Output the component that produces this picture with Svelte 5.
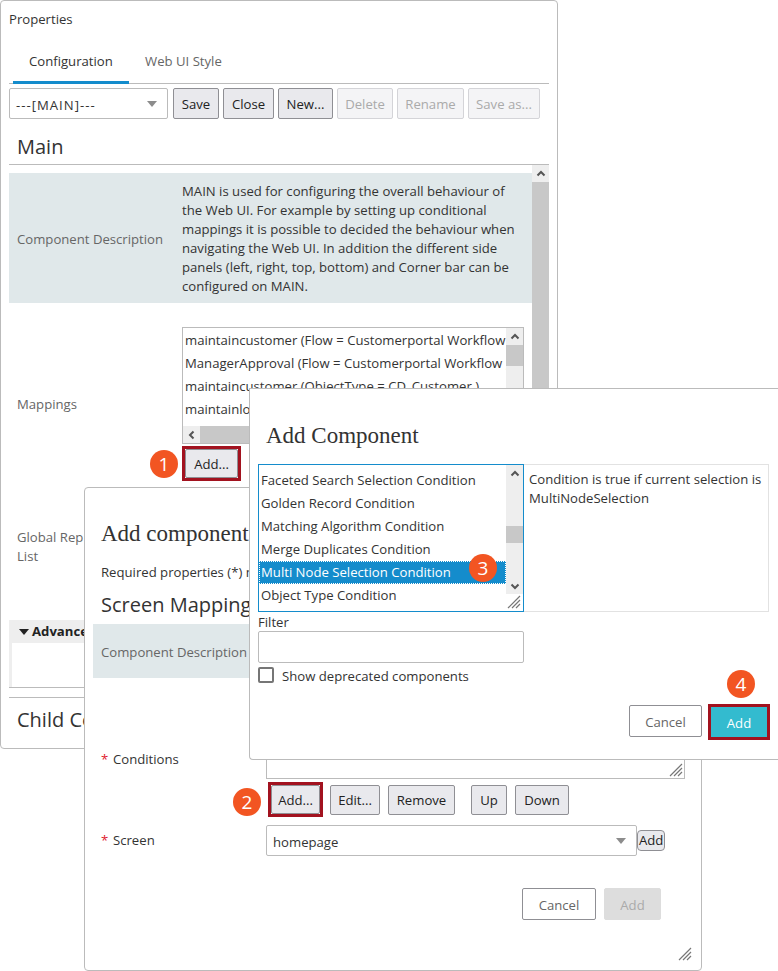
<script>
	const tools = [
		{ label: 'Save' },
		{ label: 'Close' },
		{ label: 'New...' },
		{ label: 'Delete', off: true },
		{ label: 'Rename', off: true },
		{ label: 'Save as...', off: true }
	];
	const mappings = [
		'maintaincustomer (Flow = Customerportal Workflow , State = Start )',
		'ManagerApproval (Flow = Customerportal Workflow , State = Approve )',
		'maintaincustomer (ObjectType = CD_Customer )',
		'maintainlocation (ObjectType = CD_Location )'
	];
	const components = [
		'Faceted Search Selection Condition',
		'Golden Record Condition',
		'Matching Algorithm Condition',
		'Merge Duplicates Condition',
		'Multi Node Selection Condition',
		'Object Type Condition'
	];
	let selected = 'Multi Node Selection Condition';
</script>

{#snippet up()}
	<svg class="arrow" viewBox="0 0 10 10"><path d="M1.5 6.5 5 3l3.5 3.5" /></svg>
{/snippet}
{#snippet down()}
	<svg class="arrow" viewBox="0 0 10 10"><path d="M1.5 3.5 5 7l3.5-3.5" /></svg>
{/snippet}
{#snippet left()}
	<svg class="arrow" viewBox="0 0 10 10"><path d="M6.5 1.5 3 5l3.5 3.5" /></svg>
{/snippet}
{#snippet grip()}
	<svg class="grip" viewBox="0 0 14 14"><path d="M1 13 13 1M5 13l8-8M9 13l4-4" /></svg>
{/snippet}
{#snippet caret()}
	<span class="caret"></span>
{/snippet}

<div class="desk">
	<section class="win props">
		<div class="win-title">Properties</div>
		<div class="tabs">
			<div class="tab active">Configuration</div>
			<div class="tab">Web UI Style</div>
		</div>
		<div class="toolbar">
			<div class="select main-select">---[MAIN]---{@render caret()}</div>
			{#each tools as t}
				<button class="btn" class:off={t.off}>{t.label}</button>
			{/each}
		</div>
		<h2 class="main-head">Main</h2>
		<div class="scroller">
			<div class="content">
				<div class="band desc-row">
					<div class="label">Component Description</div>
					<p class="desc">MAIN is used for configuring the overall behaviour of the Web UI. For example by setting up conditional mappings it is possible to decided the behaviour when navigating the Web UI. In addition the different side panels (left, right, top, bottom) and Corner bar can be configured on MAIN.</p>
				</div>
				<div class="map-row">
					<div class="label">Mappings</div>
					<div class="map-box">
						<div class="list map-list">
							<div class="list-body">
								<div class="list-items">
									{#each mappings as m}
										<div class="item">{m}</div>
									{/each}
								</div>
								<div class="vbar">
									<span class="bar-btn">{@render up()}</span>
									<span class="thumb"></span>
								</div>
							</div>
							<div class="hbar"><span class="bar-btn">{@render left()}</span></div>
						</div>
						<div class="map-actions">
							<span class="badge">1</span>
							<span class="callout"><button class="btn">Add...</button></span>
						</div>
					</div>
				</div>
				<div class="label global">Global Rep<br />List</div>
				<div class="advanced">
					<div class="adv-head"><span class="adv-caret"></span>Advanced</div>
					<div class="adv-body"></div>
				</div>
			</div>
			<div class="side-bar">
				<span class="bar-btn">{@render up()}</span>
				<span class="side-thumb"></span>
			</div>
		</div>
		<h2 class="child">Child Components</h2>
	</section>

	<section class="win mapping">
		<h1 class="serif">Add component</h1>
		<div class="required">Required properties (*) must be filled in</div>
		<h2 class="screen-head">Screen Mapping</h2>
		<div class="band short"><div class="label">Component Description</div></div>
		<div class="cond-row">
			<div class="field-label"><span class="star">*</span>Conditions</div>
			<div class="cond-box">{@render grip()}</div>
		</div>
		<div class="cond-actions">
			<span class="badge">2</span>
			<span class="callout"><button class="btn">Add...</button></span>
			<button class="btn edit">Edit...</button>
			<button class="btn remove">Remove</button>
			<button class="btn move">Up</button>
			<button class="btn lower">Down</button>
		</div>
		<div class="screen-row">
			<div class="field-label"><span class="star">*</span>Screen</div>
			<div class="select screen-select">homepage{@render caret()}</div>
			<button class="btn tiny">Add</button>
		</div>
		<div class="foot map-foot">
			<button class="btn plain">Cancel</button>
			<button class="btn dead">Add</button>
		</div>
		<span class="corner">{@render grip()}</span>
	</section>

	<section class="win picker">
		<h1 class="serif">Add Component</h1>
		<div class="pick-row">
			<div class="list pick-list">
				<div class="list-items">
					{#each components as c}
						<div class="item" class:sel={c === selected}>{c}</div>
					{/each}
				</div>
				<div class="vbar pick-bar">
					<span class="bar-btn">{@render up()}</span>
					<span class="thumb pick-thumb"></span>
					<span class="bar-btn low">{@render down()}</span>
				</div>
				<span class="badge on-list">3</span>
				<span class="corner list-corner">{@render grip()}</span>
			</div>
			<div class="pick-desc">Condition is true if current selection is MultiNodeSelection</div>
		</div>
		<div class="filter-label">Filter</div>
		<div class="filter"></div>
		<div class="check-row"><span class="check"></span><span class="check-text">Show deprecated components</span></div>
		<div class="foot pick-foot">
			<button class="btn plain">Cancel</button>
			<span class="go-wrap">
				<span class="badge four">4</span>
				<span class="callout teal"><button class="btn go">Add</button></span>
			</span>
		</div>
	</section>
</div>

<style>
	:global(body) {
		margin: 0;
		background: #fff;
	}

	.desk {
		position: relative;
		width: 778px;
		height: 971px;
		overflow: hidden;
		font: 13.15px/19px "Open Sans", "Noto Sans", sans-serif;
		color: #333;
	}

	.win {
		position: absolute;
		box-sizing: border-box;
		background: #fff;
		border: 1px solid #bbb;
		border-radius: 4px;
		overflow: hidden;
	}

	.props {
		left: 0;
		top: 0;
		width: 558px;
		height: 749px;
		padding: 0 8px;
	}

	.mapping {
		left: 84px;
		top: 487px;
		width: 618px;
		height: 484px;
		padding: 0 16px;
	}

	.picker {
		left: 249px;
		top: 388px;
		width: 529px;
		height: 372px;
		padding: 0 8px;
		border-radius: 0 0 0 4px;
		border-right: 0;
	}

	h1, h2, p {
		margin: 0;
		font-weight: 400;
	}

	.serif {
		font: 23px/28px "Liberation Serif", "DejaVu Serif", serif;
		color: #333;
		white-space: nowrap;
	}

	.win-title {
		margin-top: 8px;
		line-height: 20px;
	}

	.tabs {
		display: flex;
		height: 46px;
		margin-top: 9px;
		border-bottom: 1px solid #bbb;
		box-sizing: border-box;
	}

	.tab {
		box-sizing: border-box;
		padding: 10px 16px 0;
		line-height: 26px;
		color: #666;
	}

	.tab.active {
		width: 116px;
		margin-left: 4px;
		color: #333;
		border-bottom: 3px solid #148ccc;
		height: 46px;
	}

	.toolbar {
		display: grid;
		grid-template-columns: 160px 46px 51px 55px 56px 67px 72px;
		column-gap: 4px;
		margin-top: 4px;
		height: 31px;
	}

	.btn {
		box-sizing: border-box;
		height: 30px;
		padding: 2px 0 0;
		font: inherit;
		color: #222;
		background: #e9e9ed;
		border: 1px solid #8f8f94;
		border-radius: 2px;
		white-space: nowrap;
	}

	.toolbar .btn {
		height: 31px;
	}

	.btn.off {
		color: #aaa;
		background: #f4f4f6;
		border-color: #d4d4d8;
	}

	.select {
		position: relative;
		box-sizing: border-box;
		height: 31px;
		padding: 7px 6px 0;
		background: #fff;
		border: 1px solid #bbb;
		border-radius: 2px;
	}

	.main-select {
		width: 159px;
		letter-spacing: 1px;
	}

	.caret {
		position: absolute;
		right: 10px;
		top: 12px;
		border: 5.5px solid transparent;
		border-top: 6px solid #8c8c8c;
		border-bottom: 0;
	}

	.main-head {
		box-sizing: border-box;
		height: 46px;
		padding: 14px 8px 0;
		font-size: 20px;
		line-height: 28px;
		border-bottom: 1px solid #bbb;
	}

	.scroller {
		display: flex;
		height: 525px;
	}

	.content {
		width: 523px;
		padding-top: 8px;
		box-sizing: border-box;
	}

	.side-bar {
		display: flex;
		flex-direction: column;
		width: 17px;
		background: #eee;
	}

	.side-thumb {
		flex: 1;
		background: #c8c8c8;
	}

	.bar-btn {
		display: flex;
		align-items: center;
		justify-content: center;
		flex: none;
		width: 17px;
		height: 17px;
		background: #eee;
	}

	.arrow {
		width: 10px;
		height: 10px;
		fill: none;
		stroke: #555;
		stroke-width: 2;
	}

	.band {
		background: #e0e8ea;
	}

	.desc-row {
		display: flex;
		align-items: center;
		height: 130px;
		padding: 2px 0 0 8px;
		box-sizing: border-box;
	}

	.label {
		color: #666;
	}

	.desc-row .label {
		width: 165px;
		flex: none;
	}

	.desc {
		width: 340px;
	}

	.map-row {
		display: flex;
		align-items: flex-start;
		margin-top: 24px;
		padding-left: 8px;
	}

	.map-row > .label {
		width: 165px;
		flex: none;
		margin-top: 68px;
	}

	.map-box {
		width: 342px;
	}

	.list {
		box-sizing: border-box;
		border: 1px solid #bbb;
		background: #fff;
	}

	.map-list {
		height: 117px;
	}

	.list-body {
		display: flex;
		height: 98px;
	}

	.list-items {
		width: 323px;
		padding-top: 1px;
		overflow: hidden;
		flex: none;
	}

	.item {
		height: 23px;
		line-height: 23px;
		padding: 0 2px;
		white-space: nowrap;
		overflow: hidden;
	}

	.vbar {
		display: flex;
		flex-direction: column;
		width: 17px;
		background: #eee;
	}

	.thumb {
		display: block;
		height: 21px;
		background: #c8c8c8;
	}

	.hbar {
		height: 17px;
		background: #c8c8c8;
	}

	.map-actions {
		position: relative;
		margin-top: 2px;
		height: 35px;
	}

	.callout {
		display: inline-flex;
		box-sizing: border-box;
		border: 3px solid #a2121f;
	}

	.badge {
		position: absolute;
		display: flex;
		align-items: center;
		justify-content: center;
		width: 28px;
		height: 28px;
		border-radius: 50%;
		background: #f25522;
		color: #fff;
		font-size: 19px;
		line-height: 1;
	}

	.map-actions .badge {
		left: -32px;
		top: 4px;
	}

	.map-actions .btn {
		width: 53px;
		height: 29px;
	}

	.global {
		margin: 47px 0 0 8px;
	}

	.advanced {
		margin-top: 54px;
		background: #eee;
		padding-left: 3px;
		border-bottom: 1px solid #bbb;
	}

	.adv-head {
		height: 23px;
		margin-left: -3px;
		padding-left: 10px;
		font-weight: 700;
		line-height: 23px;
		display: flex;
		align-items: center;
		gap: 3px;
		color: #222;
	}

	.adv-caret {
		border: 5px solid transparent;
		border-top: 6px solid #222;
		border-bottom: 0;
	}

	.adv-body {
		height: 44px;
		background: #fff;
	}

	.child {
		margin-top: 7px;
		box-sizing: border-box;
		height: 50px;
		padding: 8px 8px 0;
		border-top: 1px solid #bbb;
		font-size: 20px;
		line-height: 28px;
		white-space: nowrap;
	}

	.mapping h1 {
		margin-top: 32px;
	}

	.required {
		margin-top: 15px;
		white-space: nowrap;
	}

	.screen-head {
		margin-top: 9px;
		font-size: 20px;
		line-height: 28px;
		white-space: nowrap;
	}

	.short {
		box-sizing: border-box;
		height: 54px;
		margin: 5px -8px 0;
		padding: 19px 8px 0;
	}

	.cond-row {
		display: flex;
		margin-top: 60px;
		height: 41px;
	}

	.field-label {
		width: 165px;
		flex: none;
		white-space: nowrap;
	}

	.cond-row .field-label {
		margin-top: 12px;
	}

	.star {
		display: inline-block;
		width: 12px;
		color: #e0222f;
	}

	.cond-box {
		position: relative;
		box-sizing: border-box;
		width: 419px;
		height: 41px;
		border: 1px solid #bbb;
	}

	.grip {
		position: absolute;
		right: 1px;
		bottom: 1px;
		width: 14px;
		height: 14px;
		fill: none;
		stroke: #777;
		stroke-width: 1.2;
	}

	.cond-actions {
		position: relative;
		display: flex;
		align-items: center;
		height: 35px;
		margin: 3px 0 0 167px;
	}

	.cond-actions .badge {
		left: -35px;
		top: 6px;
	}

	.cond-actions .callout .btn {
		width: 49px;
		height: 29px;
	}

	.edit {
		width: 50px;
		margin-left: 7px;
	}

	.remove {
		width: 67px;
		margin-left: 8px;
	}

	.move {
		width: 36px;
		margin: 0 8px 0 16px;
	}

	.lower {
		width: 54px;
	}

	.screen-row {
		display: flex;
		align-items: center;
		margin-top: 8px;
	}

	.screen-select {
		width: 371px;
	}

	.tiny {
		height: 21px;
		padding: 0 1px;
		border-radius: 4px;
	}

	.foot {
		display: flex;
	}

	.map-foot {
		margin: 32px 24px 0 0;
		justify-content: flex-end;
		gap: 8px;
	}

	.plain {
		width: 74px;
		height: 32px;
		background: #fff;
		color: #666;
	}

	.dead {
		width: 57px;
		height: 32px;
		background: #ddd;
		border-color: #ddd;
		color: #aaa;
	}

	.corner {
		position: absolute;
		right: 8px;
		bottom: 8px;
		width: 14px;
		height: 14px;
	}

	.picker h1 {
		margin-top: 33px;
		padding-left: 8px;
	}

	.pick-row {
		display: flex;
		margin-top: 14px;
	}

	.pick-list {
		position: relative;
		display: flex;
		width: 266px;
		height: 148px;
		border-color: #148ccc;
	}

	.pick-list .list-items {
		width: 247px;
		padding-top: 4px;
	}

	.pick-bar {
		height: 129px;
	}

	.pick-thumb {
		margin-top: 44px;
		height: 17px;
	}

	.low {
		margin-top: 34px;
	}

	.sel {
		background: #148ccc;
		color: #fff;
		outline: 1px dotted #fff;
		outline-offset: -1px;
	}

	.on-list {
		left: 210px;
		top: 89px;
	}

	.list-corner {
		right: 1px;
		bottom: 1px;
	}

	.pick-desc {
		box-sizing: border-box;
		width: 245px;
		height: 148px;
		padding: 5px;
		border: 1px solid #e2e2e2;
		border-left: 0;
	}

	.filter-label {
		height: 19px;
		line-height: 21px;
	}

	.filter {
		box-sizing: border-box;
		width: 266px;
		height: 32px;
		border: 1px solid #bbb;
		border-radius: 2px;
	}

	.check-row {
		display: flex;
		align-items: center;
		gap: 8px;
		margin-top: 4px;
		height: 16px;
	}

	.check-text {
		padding-top: 2px;
	}

	.check {
		box-sizing: border-box;
		width: 16px;
		height: 16px;
		border: 2px solid #767676;
		border-radius: 2px;
	}

	.pick-foot {
		margin: 21px 0 0 371px;
		gap: 6px;
	}

	.pick-foot .plain {
		margin-top: 1px;
	}

	.go-wrap {
		position: relative;
		display: flex;
	}

	.four {
		left: 19px;
		top: -34px;
	}

	.teal {
		width: 62px;
		height: 36px;
	}

	.go {
		width: 56px;
		height: 30px;
		background: #33bbcf;
		border: 0;
		border-radius: 0;
		color: #fff;
	}
</style>
